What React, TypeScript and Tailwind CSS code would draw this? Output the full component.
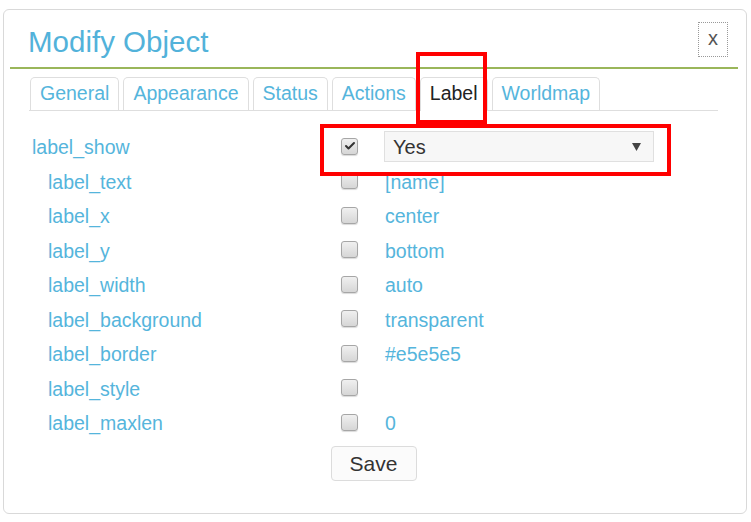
import { Check } from 'lucide-react';

const tabs = ['General', 'Appearance', 'Status', 'Actions', 'Label', 'Worldmap'];

const rows = [
    { name: 'label_text', value: '[name]' },
    { name: 'label_x', value: 'center' },
    { name: 'label_y', value: 'bottom' },
    { name: 'label_width', value: 'auto' },
    { name: 'label_background', value: 'transparent' },
    { name: 'label_border', value: '#e5e5e5' },
    { name: 'label_style', value: '' },
    { name: 'label_maxlen', value: '0' },
];

const CheckBox = ({ checked = false }: { checked?: boolean }) => (
    <div className="w-[17px] h-[17px] mt-[-3px] rounded-[3px] border border-[#a6a6a6] bg-gradient-to-b from-[#f0f0f0] to-[#d6d6d6] shadow-[0_1px_1px_rgba(0,0,0,0.15)] flex items-center justify-center">
        {checked && <Check className="w-[12px] h-[12px] text-[#333]" strokeWidth={4} />}
    </div>
);

export default function App() {
    return (
        <div className="relative w-[751px] h-[522px] bg-white pt-[9px] pl-[3px] font-['Liberation_Sans',Arial,sans-serif]">
            {/* Dialog */}
            <div className="w-[744px] h-[505px] border border-[#d9d9d9] rounded-[6px] bg-white flex flex-col">
                {/* Header */}
                <div className="ml-[6px] mr-[8px] h-[59px] flex justify-between border-b-2 border-[#9ab65a] pl-[18px] pr-[10px]">
                    <h1 className="mt-[15px] text-[29.5px] leading-[34px] text-[#52b2da]">Modify Object</h1>
                    <button className="mt-[12px] w-[30px] h-[35px] border border-dotted border-[#999] text-[20px] leading-none text-[#555] flex items-center justify-center pb-[3px]">
                        x
                    </button>
                </div>

                {/* Tabs */}
                <div className="mt-[8px] ml-[25px] w-[689px] flex gap-[4px] pl-[1px] border-b border-[#dedede]">
                    {tabs.map((t) => (
                        <div
                            key={t}
                            className={`px-[9px] pt-[4px] pb-[7px] text-[19.5px] leading-[22px] border border-b-0 rounded-t-[5px] mb-[-1px] ${t === 'Label'
                                ? 'border-[#dedede] bg-white text-[#222] border-b border-b-white'
                                : 'border-[#dedede] text-[#55b5dc]'
                                }`}
                        >
                            {t}
                        </div>
                    ))}
                </div>

                {/* Rows */}
                <div className="mt-[19.5px] flex flex-col text-[19.5px] text-[#55b5dc]">
                    <div className="h-[34.5px] flex items-center">
                        <div className="w-[337px] pl-[28px]">label_show</div>
                        <CheckBox checked />
                        <div className="ml-[26px] w-[270px] h-[31px] mt-[-2px] border border-[#e0e0e0] bg-[#f7f7f7] flex items-center justify-between pl-[8px] pr-[12px] text-[20px] text-[#333]">
                            <span>Yes</span>
                            <svg width="9" height="8" viewBox="0 0 9 8">
                                <polygon points="0,0 9,0 4.5,8" fill="#444" />
                            </svg>
                        </div>
                    </div>
                    {rows.map((r) => (
                        <div key={r.name} className="h-[34.5px] flex items-center">
                            <div className="w-[337px] pl-[44px]">{r.name}</div>
                            <CheckBox />
                            <div className="ml-[27px]">{r.value}</div>
                        </div>
                    ))}
                </div>

                <div className="mt-[5px] flex justify-center pr-[3px]">
                    <button className="w-[86px] h-[35px] border border-[#dcdcdc] rounded-[4px] bg-[#fbfbfb] text-[21px] text-[#333]">
                        Save
                    </button>
                </div>
            </div>

            {/* Red annotation boxes */}
            <div className="absolute left-[416px] top-[52px] w-[71px] h-[72px] border-[4px] border-[#ff0000]" />
            <div className="absolute left-[320px] top-[124px] w-[351px] h-[52px] border-[4px] border-[#ff0000]" />
        </div>
    );
}
